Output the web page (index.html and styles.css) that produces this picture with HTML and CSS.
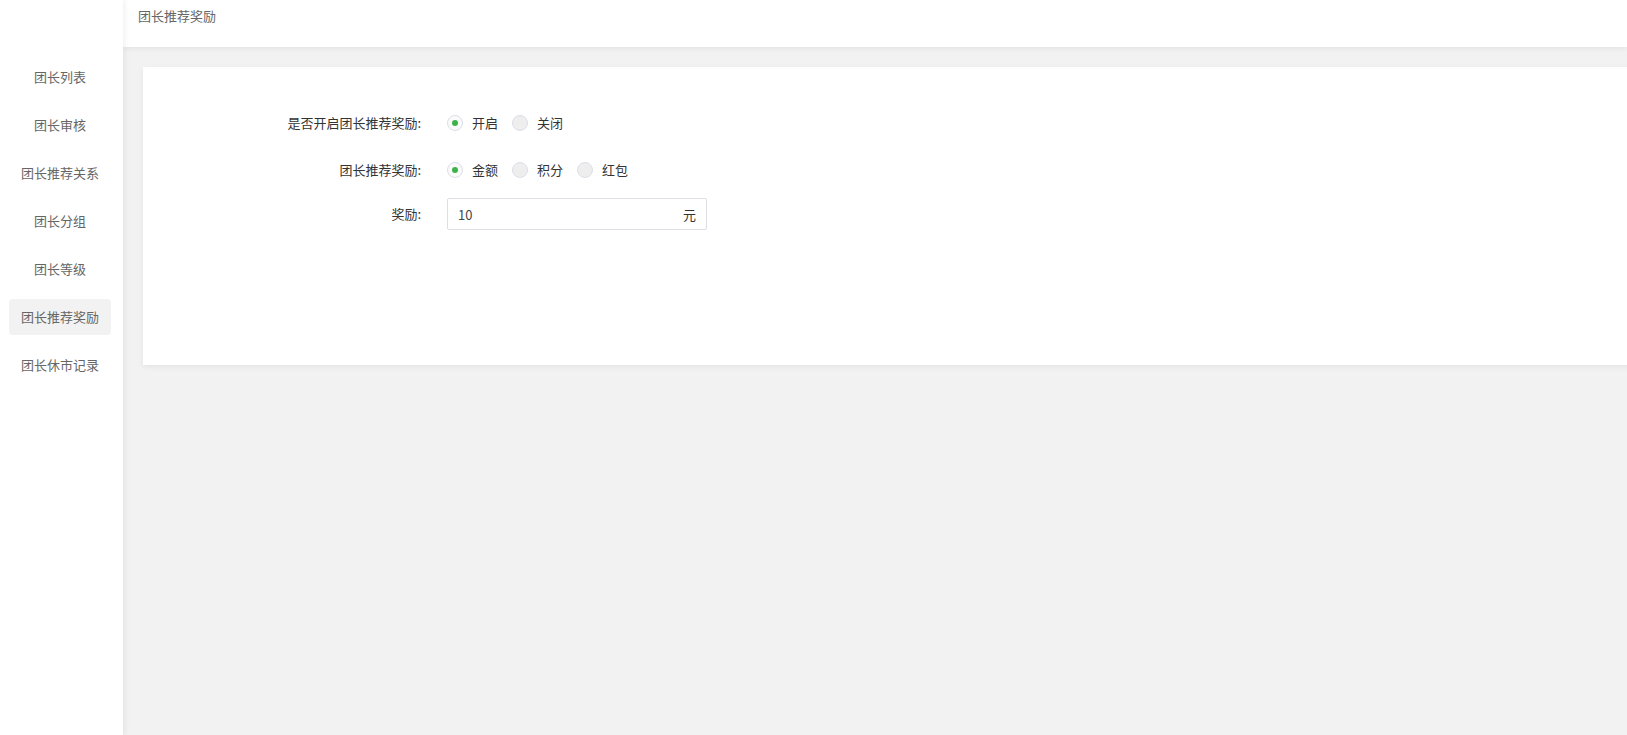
FILE: index.html
```html
<!DOCTYPE html>
<html lang="zh-CN">
<head>
<meta charset="utf-8">
<title>团长推荐奖励</title>
<link rel="stylesheet" href="styles.css">
</head>
<body>
<aside class="sidebar">
  <nav class="nav">
    <div class="nav-item">团长列表</div>
    <div class="nav-item">团长审核</div>
    <div class="nav-item">团长推荐关系</div>
    <div class="nav-item">团长分组</div>
    <div class="nav-item">团长等级</div>
    <div class="nav-item active">团长推荐奖励</div>
    <div class="nav-item">团长休市记录</div>
  </nav>
</aside>
<main class="main">
  <header class="header">
    <span class="header-title">团长推荐奖励</span>
  </header>
  <section class="card">
    <div class="form-row row-1">
      <div class="form-label">是否开启团长推荐奖励:</div>
      <div class="form-control">
        <label class="radio"><span class="radio-dot checked"></span><span class="radio-text">开启</span></label>
        <label class="radio"><span class="radio-dot"></span><span class="radio-text">关闭</span></label>
      </div>
    </div>
    <div class="form-row row-2">
      <div class="form-label">团长推荐奖励:</div>
      <div class="form-control">
        <label class="radio"><span class="radio-dot checked"></span><span class="radio-text">金额</span></label>
        <label class="radio"><span class="radio-dot"></span><span class="radio-text">积分</span></label>
        <label class="radio"><span class="radio-dot"></span><span class="radio-text">红包</span></label>
      </div>
    </div>
    <div class="form-row row-3">
      <div class="form-label">奖励:</div>
      <div class="form-control">
        <div class="input">
          <span class="input-value">10</span>
          <span class="input-suffix">元</span>
        </div>
      </div>
    </div>
  </section>
</main>
</body>
</html>
```

FILE: styles.css
```css
* {
  box-sizing: border-box;
}

html, body {
  margin: 0;
  padding: 0;
  height: 100%;
}

body {
  display: flex;
  height: 100vh;
  overflow: hidden;
  font-family: "Noto Sans CJK SC", "Noto Sans", sans-serif;
  font-size: 13px;
  color: #333;
  background: #f2f2f2;
}

.sidebar {
  width: 123px;
  flex: 0 0 123px;
  background: #fff;
  box-shadow: 2px 0 5px rgba(0, 0, 0, 0.06);
  position: relative;
  z-index: 2;
  padding-top: 59px;
}

.nav {
  display: flex;
  flex-direction: column;
  gap: 12px;
}

.nav-item {
  width: 102px;
  height: 36px;
  margin-left: 9px;
  line-height: 36px;
  text-align: center;
  color: #666;
  font-size: 13px;
  border-radius: 4px;
}

.nav-item.active {
  background: #f2f2f2;
}

.main {
  flex: 1;
  min-width: 0;
  display: flex;
  flex-direction: column;
  background: #f2f2f2;
}

.header {
  height: 47px;
  flex: 0 0 47px;
  background: #fff;
  box-shadow: 0 2px 5px rgba(0, 0, 0, 0.06);
  padding-left: 15px;
  padding-top: 6px;
  position: relative;
  z-index: 1;
}

.header-title {
  font-size: 13px;
  line-height: 18px;
  color: #666;
}

.card {
  margin: 20px -20px 0 20px;
  height: 298px;
  background: #fff;
  box-shadow: 0 2px 6px rgba(0, 0, 0, 0.06);
  padding-top: 40px;
}

.form-row {
  display: flex;
  align-items: center;
  height: 32px;
}

.row-1 {
  margin-bottom: 15px;
}

.row-2 {
  margin-bottom: 12px;
}

.form-label {
  width: 278px;
  margin-right: 26px;
  text-align: right;
  color: #333;
  font-size: 13px;
  line-height: 18px;
}

.form-control {
  display: flex;
  align-items: center;
}

.radio {
  display: flex;
  align-items: center;
  margin-right: 14px;
}

.radio-dot {
  width: 16px;
  height: 16px;
  border-radius: 50%;
  border: 1px solid #dcdfe6;
  background: #eeeeee;
  display: flex;
  align-items: center;
  justify-content: center;
}

.radio-dot.checked {
  background: #fafafa;
}

.radio-dot.checked::after {
  content: "";
  width: 6px;
  height: 6px;
  border-radius: 50%;
  background: #3cb34a;
}

.radio-text {
  margin-left: 9px;
  color: #333;
  font-size: 13px;
  line-height: 18px;
}

.input {
  width: 260px;
  height: 32px;
  border: 1px solid #dcdfe6;
  border-radius: 2px;
  display: flex;
  align-items: center;
  justify-content: space-between;
  padding: 0 10px 0 10px;
  background: #fff;
}

.input-value {
  color: #444;
  font-size: 13px;
}

.input-suffix {
  color: #333;
  font-size: 13px;
}
```
